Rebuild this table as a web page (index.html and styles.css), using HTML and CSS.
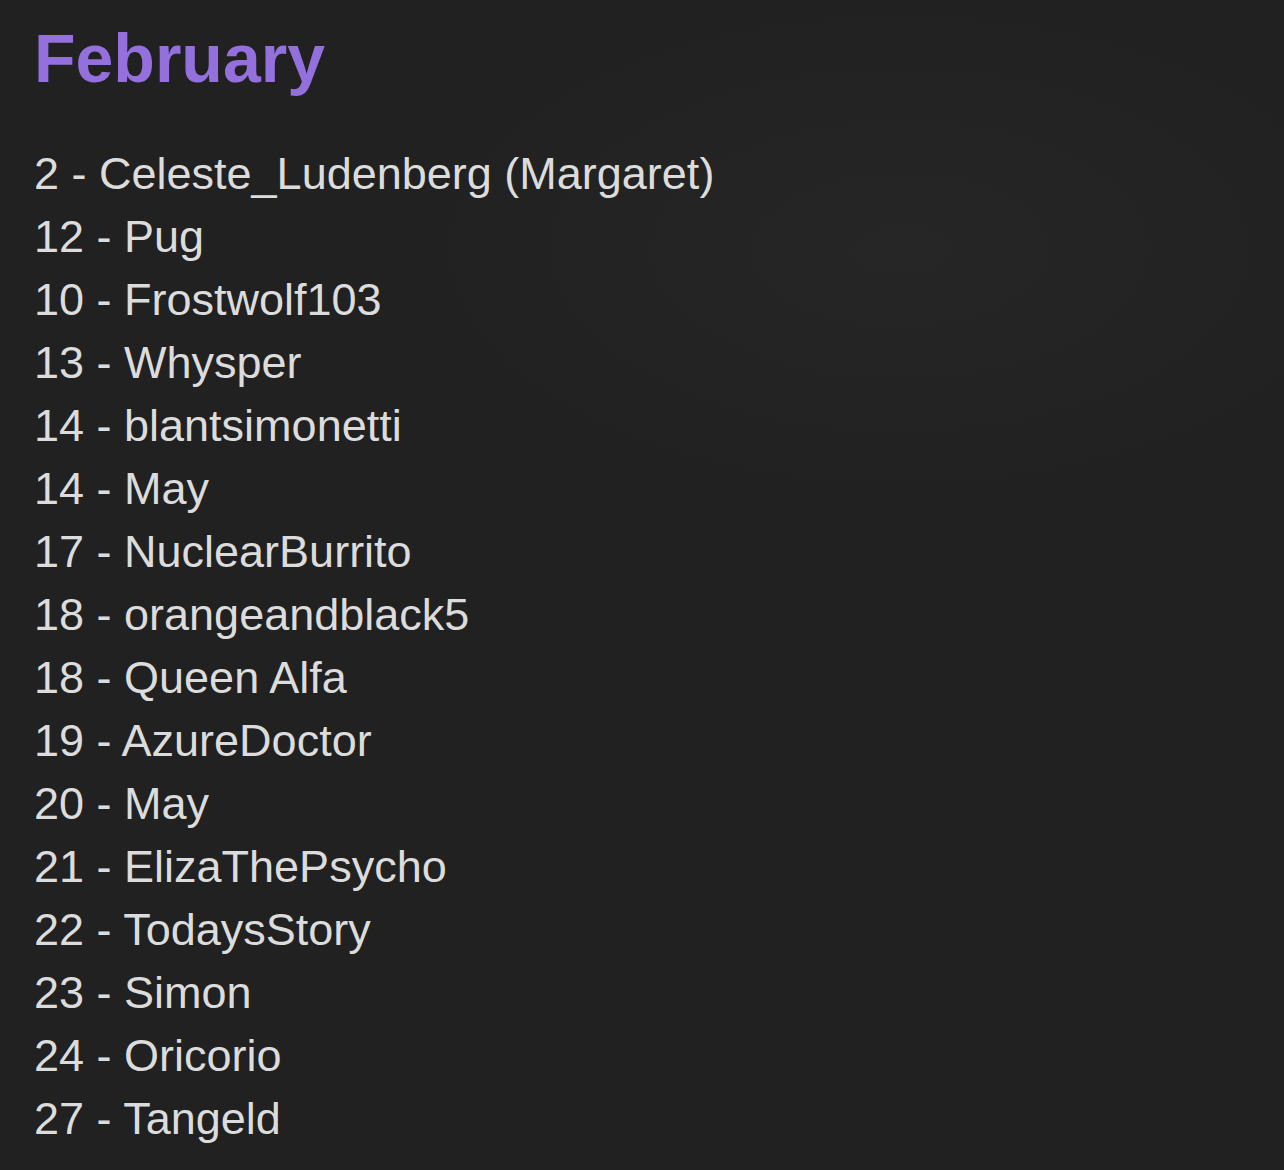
FILE: index.html
```html
<!DOCTYPE html>
<html lang="en">
<head>
<meta charset="utf-8">
<title>February</title>
<link rel="stylesheet" href="styles.css">
</head>
<body>
<main class="page">
  <h1 class="month">February</h1>
  <ul class="list">
    <li>2 - Celeste_Ludenberg (Margaret)</li>
    <li>12 - Pug</li>
    <li>10 - Frostwolf103</li>
    <li>13 - Whysper</li>
    <li>14 - blantsimonetti</li>
    <li>14 - May</li>
    <li>17 - NuclearBurrito</li>
    <li>18 - orangeandblack5</li>
    <li>18 - Queen Alfa</li>
    <li>19 - AzureDoctor</li>
    <li>20 - May</li>
    <li>21 - ElizaThePsycho</li>
    <li>22 - TodaysStory</li>
    <li>23 - Simon</li>
    <li>24 - Oricorio</li>
    <li>27 - Tangeld</li>
  </ul>
</main>
</body>
</html>
```
FILE: styles.css
```css
html, body {
  margin: 0;
  padding: 0;
  background: #212121;
}
body {
  min-height: 1170px;
  font-family: "Liberation Sans", Arial, sans-serif;
  color: #dcdcdc;
  background: radial-gradient(ellipse 500px 260px at 900px 250px, #262626 0%, #212121 100%);
  background-color: #212121;
}
.page {
  padding: 24px 34px 0;
}
.month {
  margin: 0;
  font-size: 68px;
  line-height: 68px;
  font-weight: 700;
  color: #9370db;
}
.list {
  list-style: none;
  margin: 50px 0 0;
  padding: 0;
  font-size: 45px;
  line-height: 63px;
}
```
